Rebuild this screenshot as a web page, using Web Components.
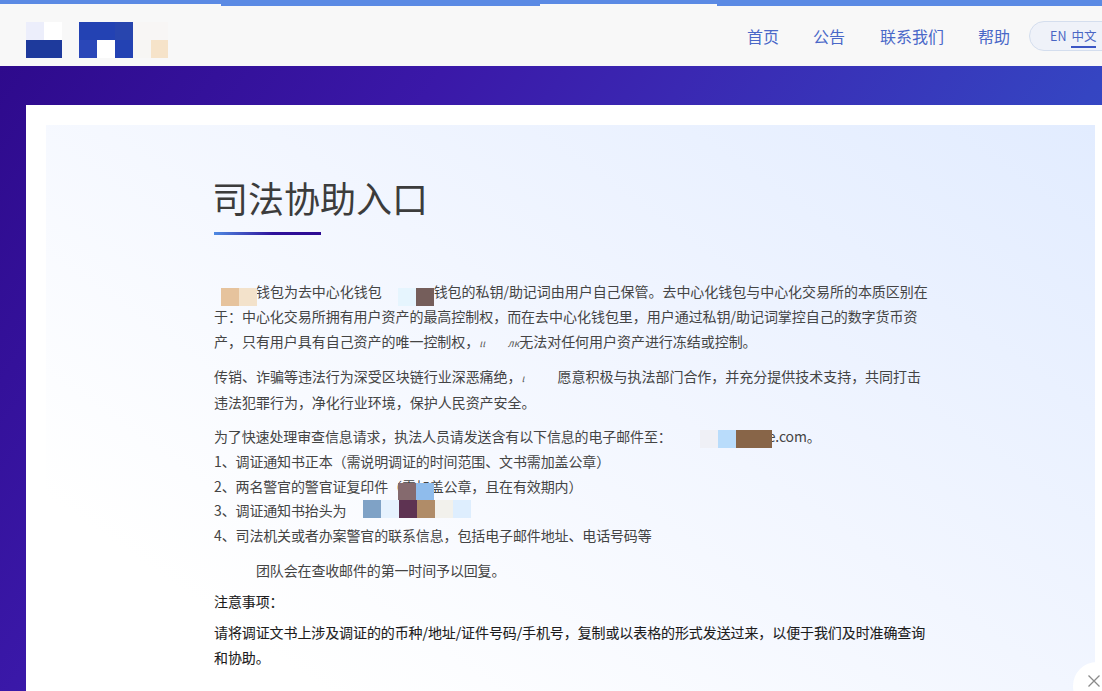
<!DOCTYPE html>
<html lang="zh"><head><meta charset="utf-8">
<style>
html,body{margin:0;height:691px;overflow:hidden;background:#fff;font-family:"Noto Sans CJK SC","Noto Sans",sans-serif}
</style></head>
<body>
<top-strip></top-strip>
<site-header></site-header>
<hero-band>
  <legal-article></legal-article>
</hero-band>
<close-fab></close-fab>
<script>
function def(name, html, setup){
  customElements.define(name, class extends HTMLElement{
    constructor(){super();this.attachShadow({mode:'open'}).innerHTML=html;}
    connectedCallback(){ if(setup) setup(this); }
  });
}
/* A pixelated redaction: inline spacer holding 18px colour tiles that lie over the text */
def('mosaic-mask',`<style>
:host{display:inline-block;position:relative;height:1em;vertical-align:baseline}
#t{position:absolute;display:flex;flex-wrap:nowrap}
i{display:block;width:18px;height:18px;flex:none}
</style><div id="t"></div>`,el=>{
  el.style.width=(el.getAttribute('w')||0)+'px';
  const t=el.shadowRoot.getElementById('t');
  t.style.left=(el.getAttribute('x')||0)+'px';
  t.style.top=(el.getAttribute('y')||-3)+'px';
  (el.getAttribute('c')||'').split(' ').filter(Boolean).forEach(c=>{
    const i=document.createElement('i');i.style.background=c;t.appendChild(i);
  });
});
def('top-strip',`<style>
:host{display:block;height:0;position:relative;z-index:2}
div{display:flex;align-items:flex-start}
i{display:block;background:#5b8ae4}
</style><div><i style="width:221px;height:4px"></i><i style="width:319px;height:6px"></i><i style="width:177px;height:4px"></i><i style="flex:1;height:6px"></i></div>`);
def('logo-mosaic',`<style>
:host{display:grid;grid-template-columns:18px 18px 17px 18px 18px 18px 18px 17px;grid-auto-rows:18px;width:142px}
i{display:block}
</style>
<i style="background:#eceefb"></i><i style="background:#fff"></i><i></i><i style="background:#2342b3"></i><i style="background:#2342b3"></i><i style="background:#2845ae"></i><i style="background:#f8f6f5"></i><i style="background:#f8f6f5"></i>
<i style="background:#1e3a9c"></i><i style="background:#1e3a9c"></i><i></i><i style="background:#2a47b8"></i><i style="background:#fff"></i><i style="background:#2342b3"></i><i style="background:#f7f6f4"></i><i style="background:#f6e3c9"></i>`);
def('lang-switch',`<style>
:host{display:flex;align-items:center;flex:none;box-sizing:border-box;width:110px;height:30px;padding-left:20px;gap:5px;border:1px solid #d4deee;border-radius:15px;background:#eff2f9;font-size:12.5px;color:#4a66c4}
span{display:block;position:relative}
.on::after{content:"";position:absolute;left:0;right:0;bottom:-3px;height:2px;background:#3b55c4}
</style><span>EN</span><span class="on">中文</span>`);
def('site-header',`<style>
:host{display:grid;grid-template-columns:721px auto;align-items:center;box-sizing:border-box;height:66px;padding:5px 0 0 26px;background:#f8f8f8;overflow:hidden}
nav{display:flex;align-items:center;font-size:16px;color:#4a68c8}
a{display:block;flex:none}
</style><logo-mosaic style="margin-top:9px"></logo-mosaic>
<nav><a style="margin-right:34px">首页</a><a style="margin-right:35px">公告</a><a style="margin-right:34px">联系我们</a><a style="margin-right:19px">帮助</a><lang-switch></lang-switch></nav>`);
def('hero-band',`<style>
:host{display:block;height:625px;box-sizing:border-box;padding:39px 0 0 26px;background:linear-gradient(125deg,#2e0a8c 0%,#3a18a8 29%,#3a28b2 45%,#3545c2 72%,#3458cc 100%)}
.card{background:#fff;padding:20px 7px 0 20px;height:100%;box-sizing:border-box}
.inner{height:100%;box-sizing:border-box;background:linear-gradient(215deg,#e2ecff 0%,#f2f6ff 45%,#ffffff 85%);padding:0 0 0 168px}
</style><div class="card"><div class="inner"><slot></slot></div></div>`);
def('legal-article',`<style>
:host{display:block;width:740px;font-size:14px;line-height:25px;color:#444}
h1{margin:0 0 0 -2px;padding-top:46px;font-size:36px;line-height:52px;font-weight:400;color:#3c3c3c}
.rule{width:107px;height:3px;margin:9px 0 44px;background:linear-gradient(90deg,#4f8ae2,#2f129c 55%,#2c0a92)}
p{margin:0 0 9.5px;white-space:nowrap}
.p1{letter-spacing:-.04px;margin-bottom:8.5px}
.p2{letter-spacing:-.02px;margin-bottom:9.5px}
.p3{letter-spacing:-.13px;line-height:24.75px;margin-bottom:10.25px}
.p4{letter-spacing:-.15px;margin-bottom:6px}
.dark{color:#1c1c1c;-webkit-text-stroke:.1px #1c1c1c;letter-spacing:-.1px}
.t{margin-bottom:5.5px}
.r{display:inline-flex;justify-content:space-between;align-items:baseline;font-size:10px;color:#555;font-style:italic;letter-spacing:0}
mosaic-mask{z-index:1}
</style>
<h1>司法协助入口</h1>
<div class="rule"></div>
<p class="p1"><mosaic-mask w="42" x="7" y="5" c="#e6c39d #f3e2cb"></mosaic-mask>钱包为去中心化钱包<mosaic-mask w="52" x="16" y="5" c="#e6f5fe #755e5b"></mosaic-mask>钱包的私钥/助记词由用户自己保管。去中心化钱包与中心化交易所的本质区别在<br>于：中心化交易所拥有用户资产的最高控制权，而在去中心化钱包里，用户通过私钥/助记词掌控自己的数字货币资<br>产，只有用户具有自己资产的唯一控制权，<span class="r" style="width:40px"><span>ιι</span><span>лк</span></span>无法对任何用户资产进行冻结或控制。</p>
<p class="p2">传销、诈骗等违法行为深受区块链行业深恶痛绝，<span class="r" style="width:36px"><span>ι</span></span>愿意积极与执法部门合作，并充分提供技术支持，共同打击<br>违法犯罪行为，净化行业环境，保护人民资产安全。</p>
<p class="p3">为了快速处理审查信息请求，执法人员请发送含有以下信息的电子邮件至：<mosaic-mask w="96" x="28" y="2" c="#eff0f6 #b9dcfb #886548 #886548"></mosaic-mask>e.com。<br>1、调证通知书正本（需说明调证的时间范围、文书需加盖公章）<br>2、两名警官的警官证复印件（需加盖公章，且在有效期内）<mosaic-mask w="0" x="-184" y="5" c="#856a6e #8fbcec"></mosaic-mask><br>3、调证通知书抬头为<mosaic-mask w="0" x="17" y="-2" c="#7fa2c6 #e6f2fe #5e3352 #b08c68 #f2f1ec #deeefe"></mosaic-mask><br>4、司法机关或者办案警官的联系信息，包括电子邮件地址、电话号码等</p>
<p class="p4"><mosaic-mask w="42"></mosaic-mask>团队会在查收邮件的第一时间予以回复。</p>
<p class="dark t">注意事项：</p>
<p class="dark">请将调证文书上涉及调证的的币种/地址/证件号码/手机号，复制或以表格的形式发送过来，以便于我们及时准确查询<br>和协助。</p>`);
def('close-fab',`<style>
:host{position:fixed;left:1073px;top:662px;width:29px;height:29px;display:block;overflow:hidden;z-index:3}
b{position:absolute;left:0;top:0;display:block;width:48px;height:48px;border-radius:50%;background:#fff}
svg{position:absolute;left:15px;top:13px}
</style><b></b><svg width="12" height="12" viewBox="0 0 12 12"><path d="M.5 .5 L11.5 11.5 M11.5 .5 L.5 11.5" stroke="#8a8a8a" stroke-width="1.3" fill="none"/></svg>`);
</script>
</body></html>
